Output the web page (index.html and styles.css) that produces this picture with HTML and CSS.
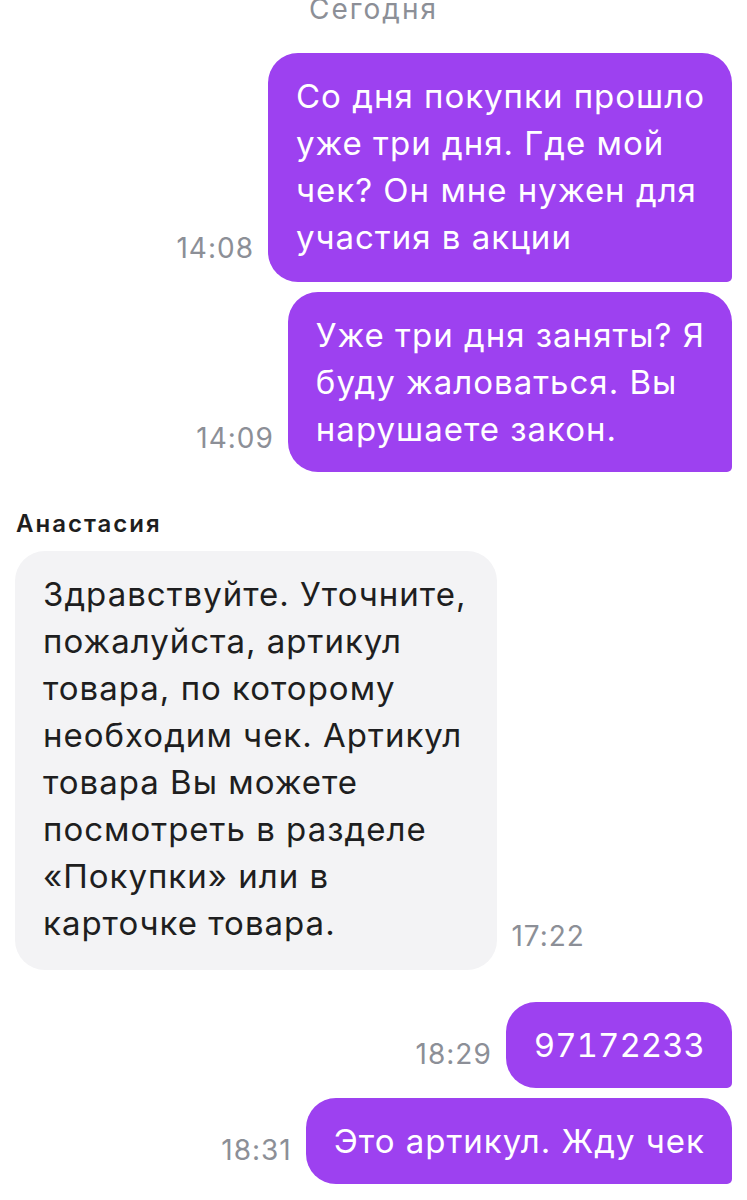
FILE: index.html
```html
<!DOCTYPE html>
<html lang="ru">
<head>
  <meta charset="UTF-8">
  <title>Чат</title>
  <link rel="stylesheet" href="styles.css">
</head>
<body>

  <div class="chat">
    <div class="day">Сегодня</div>

    <div class="row out first">
      <span class="time">14:08</span>
      <div class="bubble out-bubble">Со дня покупки прошло<br>уже три дня. Где мой<br>чек? Он мне нужен для<br>участия в акции</div>
    </div>

    <div class="row out">
      <span class="time">14:09</span>
      <div class="bubble out-bubble">Уже три дня заняты? Я<br>буду жаловаться. Вы<br>нарушаете закон.</div>
    </div>

    <div class="author">Анастасия</div>
    <div class="row in">
      <div class="bubble in-bubble">Здравствуйте. Уточните,<br>пожалуйста, артикул<br>товара, по которому<br>необходим чек. Артикул<br>товара Вы можете<br>посмотреть в разделе<br>«Покупки» или в<br>карточке товара.</div>
      <span class="time">17:22</span>
    </div>

    <div class="row out gap-big">
      <span class="time">18:29</span>
      <div class="bubble out-bubble code">97172233</div>
    </div>

    <div class="row out">
      <span class="time">18:31</span>
      <div class="bubble out-bubble">Это артикул. Жду чек</div>
    </div>
  </div>

</body>
</html>
```

FILE: styles.css
```css
body {
  margin: 0;
  background: #fff;
  font-family: Inter, "Noto Sans", sans-serif;
  overflow: hidden;
}

.chat {
  padding: 0 15px;
}

.day {
  margin-top: -7px;
  text-align: center;
  font-size: 28px;
  line-height: 32px;
  letter-spacing: 2px;
  color: #8c8f97;
}

.row {
  display: flex;
  align-items: flex-end;
  gap: 14px;
  margin-top: 10px;
}

.row.out {
  justify-content: flex-end;
}

.row.first {
  margin-top: 28px;
}

.row.first .bubble {
  padding-bottom: 21px;
}

.row.gap-big {
  margin-top: 32px;
}

.bubble {
  font-size: 33px;
  line-height: 47px;
  letter-spacing: 1px;
  padding: 20px 27px 19px 28px;
  border-radius: 30px;
  white-space: nowrap;
}

.bubble.code {
  font-variant-numeric: tabular-nums;
  letter-spacing: 0;
}

.out-bubble {
  background: #9d41f0;
  color: #fff;
  border-bottom-right-radius: 5px;
}

.in-bubble {
  background: #f3f3f5;
  color: #1e1e20;
  padding: 20px 31px 23px 28px;
}

.time {
  font-size: 28px;
  line-height: 32px;
  letter-spacing: 1px;
  color: #8c8f97;
  margin-bottom: 18px;
  white-space: nowrap;
}

.author {
  margin-top: 38px;
  margin-left: 1px;
  margin-bottom: 13px;
  font-size: 24px;
  font-weight: 600;
  line-height: 28px;
  letter-spacing: 2px;
  color: #1e1e20;
}
```
